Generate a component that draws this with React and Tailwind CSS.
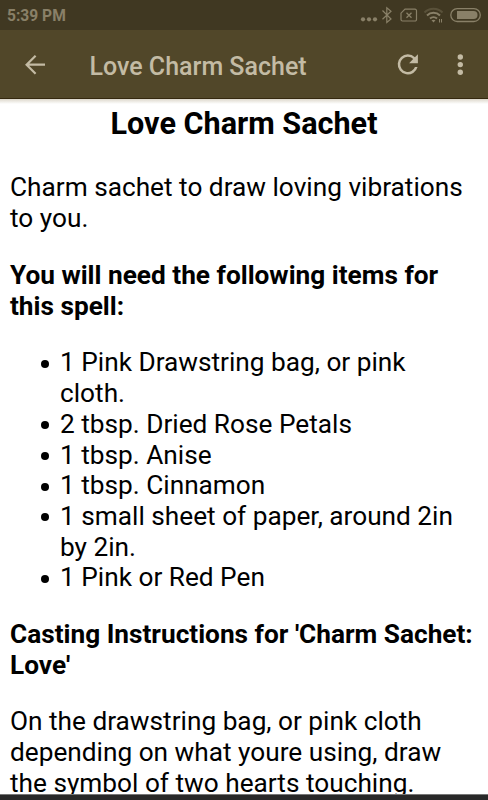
const ingredients = [
  ['1 Pink Drawstring bag, or pink', 'cloth.'],
  ['2 tbsp. Dried Rose Petals'],
  ['1 tbsp. Anise'],
  ['1 tbsp. Cinnamon'],
  ['1 small sheet of paper, around 2in', 'by 2in.'],
  ['1 Pink or Red Pen'],
];

function Lines({ lines }) {
  return lines.map((line) => (
    <span key={line} className="block whitespace-nowrap">{line}</span>
  ));
}

function StatusBar() {
  return (
    <div className="flex h-[30px] shrink-0 items-center justify-between bg-[#403822] pl-[7px] text-[#898068]">
      <span className="mt-[2px] text-[15.600px] font-bold leading-[30px]">5:39 PM</span>
      <svg className="h-[30px] w-[128px]" viewBox="360 0 128 30" fill="none" stroke="currentColor">
        <g fill="currentColor" stroke="none">
          <circle cx="363" cy="19.300" r="2.1" />
          <circle cx="369" cy="19.300" r="2.1" />
          <circle cx="375" cy="19.300" r="2.1" />
        </g>
        <path d="M382.5 10.5l8.5 8.5-4.2 3.5V7.8l4.2 3.4-8.5 8" strokeWidth="1.2" />
        <path d="M405 9.2h10a1.5 1.5 0 0 1 1.500 1.500v8.800a1.500 1.500 0 0 1-1.500 1.500h-12.500a1.500 1.500 0 0 1-1.500-1.500v-6.300z" strokeWidth="1.2" />
        <path d="M406.500 12.700l5 5M411.500 12.700l-5 5" strokeWidth="1.300" />
        <path d="M424.500 12.500a12.500 12.500 0 0 1 18 0" strokeWidth="2" opacity=".35" />
        <path d="M427 15.500a9.300 9.300 0 0 1 13 0M430 18.600a5.200 5.200 0 0 1 7 0" strokeWidth="2" />
        <path d="M431.500 20.300q2-1.300 4 0l-2 2.200z" fill="currentColor" stroke="none" />
        <path d="M439.500 19v3.500M441.500 19v3.500" strokeWidth="1" />
        <rect x="450.800" y="8.700" width="29.500" height="12.800" rx="6.400" strokeWidth="1.300" />
        <path d="M457 11h16.500a4 4 0 0 1 0 8H457z" fill="currentColor" stroke="none" />
      </svg>
    </div>
  );
}

function AppBar() {
  return (
    <header className="flex h-[69px] shrink-0 items-center border-b border-[#35290f] bg-[#514729] text-[#c3bba4]">
      <svg className="ml-[20px] h-[30px] w-[30px]" viewBox="20 49 30 30" fill="none" stroke="currentColor" strokeWidth="2.200">
        <path d="M45 64.700H27M35.600 55.700l-9 9 9 9" />
      </svg>
      <h1 className="ml-[39.500px] mt-[6px] whitespace-nowrap text-[25px] font-medium leading-[30px]">Love Charm Sachet</h1>
      <svg className="ml-auto h-[30px] w-[98px]" viewBox="390 49 98 30" fill="currentColor">
        <path transform="translate(392.700 49.300) scale(1.260)" d="M17.650 6.350A7.958 7.958 0 0 0 12 4a8 8 0 1 0 7.730 10h-2.080A6 6 0 1 1 12 6c1.660 0 3.140.690 4.220 1.780L13 11h7V4l-2.350 2.350z" />
        <circle cx="460.300" cy="57" r="2.700" />
        <circle cx="460.300" cy="64.600" r="2.700" />
        <circle cx="460.300" cy="72.200" r="2.700" />
      </svg>
    </header>
  );
}

export default function App() {
  return (
    <div className="flex h-[800px] w-[488px] flex-col overflow-hidden bg-[#292929] font-['Roboto',sans-serif]">
      <StatusBar />
      <AppBar />
      <main className="h-[696px] shrink-0 overflow-hidden border-b border-[#777777] bg-gradient-to-b from-[#ddd8cc] to-white to-[5px] pl-[10px] text-[26.230px] leading-[30.700px] text-black">
        <h2 className="mt-[7px] pr-[10px] text-center text-[30.600px] font-bold leading-[36px]">Love Charm Sachet</h2>
        <p className="mt-[30.400px]">
          <Lines lines={['Charm sachet to draw loving vibrations', 'to you.']} />
        </p>
        <h3 className="mt-[26.200px] font-bold">
          <Lines lines={['You will need the following items for', 'this spell:']} />
        </h3>
        <ul className="mt-[26px]">
          {ingredients.map((lines) => (
            <li key={lines[0]} className="flex">
              <span className="ml-[30.500px] mr-[11.500px] mt-[12.400px] h-[8px] w-[8px] shrink-0 rounded-full bg-black" />
              <div><Lines lines={lines} /></div>
            </li>
          ))}
        </ul>
        <h3 className="mt-[26px] font-bold">
          <Lines lines={["Casting Instructions for 'Charm Sachet:", "Love'"]} />
        </h3>
        <p className="mt-[26px]">
          <Lines lines={['On the drawstring bag, or pink cloth', 'depending on what youre using, draw', 'the symbol of two hearts touching.']} />
        </p>
      </main>
    </div>
  );
}
